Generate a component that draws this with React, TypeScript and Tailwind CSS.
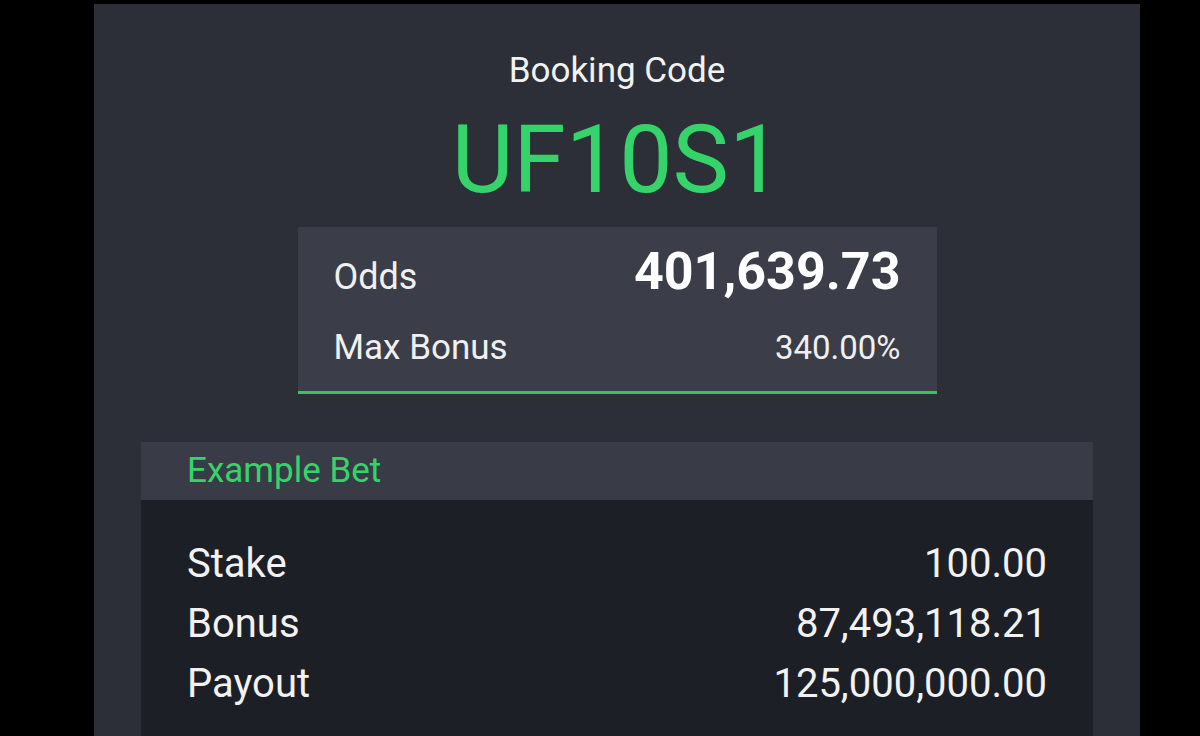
const rows = [
  { label: 'Stake', value: '100.00' },
  { label: 'Bonus', value: '87,493,118.21' },
  { label: 'Payout', value: '125,000,000.00' },
]

export default function App() {
  return (
    <div className="h-[736px] w-[1200px] overflow-hidden bg-black font-['Roboto',sans-serif]">
      <div className="mx-[94px] mt-[4px] h-[732px] w-[1046px] bg-[#2c2f37] pt-[47px]">
        <div className="text-center text-[35px] leading-[40px] text-[#f2f2f2]">
          Booking Code
        </div>
        <div className="mt-[14px] text-center text-[95px] leading-[110px] text-[#35d46a]">
          UF10S1
        </div>

        <div className="mx-auto mt-[12px] w-[639px] border-b-[3px] border-[#3fbf67] bg-[#3b3e48] px-[36px] pt-[13px] pb-[21px]">
          <div className="flex items-baseline justify-between">
            <span className="text-[36px] leading-[64px] text-[#f0f0f0]">Odds</span>
            <span className="text-[52px] font-bold leading-[64px] text-white">
              401,639.73
            </span>
          </div>
          <div className="mt-[17px] flex items-baseline justify-between">
            <span className="text-[35px] leading-[44px] text-[#f0f0f0]">
              Max Bonus
            </span>
            <span className="text-[33px] leading-[44px] text-[#f0f0f0]">
              340.00%
            </span>
          </div>
        </div>

        <div className="mx-[47px] mt-[48px]">
          <div className="flex h-[58px] items-center bg-[#393c46] px-[46px]">
            <span className="text-[35px] text-[#35d46a]">Example Bet</span>
          </div>
          <div className="flex h-[300px] flex-col bg-[#1d1f26] px-[46px] pt-[34px]">
            {rows.map((row) => (
              <div
                key={row.label}
                className="flex h-[60px] items-center justify-between text-[40px] leading-[60px] text-[#f2f2f2]"
              >
                <span>{row.label}</span>
                <span>{row.value}</span>
              </div>
            ))}
          </div>
        </div>
      </div>
    </div>
  )
}
